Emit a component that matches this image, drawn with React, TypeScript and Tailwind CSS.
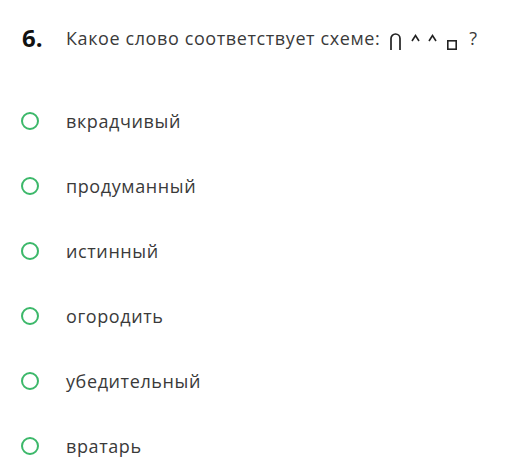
import React from "react";

const options = [
  "вкрадчивый",
  "продуманный",
  "истинный",
  "огородить",
  "убедительный",
  "вратарь",
];

function Caret() {
  return (
    <svg width="9" height="8" viewBox="0 0 9 8" className="block">
      <polyline points="1,7 4.5,1.5 8,7" fill="none" stroke="#222" strokeWidth="1.6" />
    </svg>
  );
}

export default function App() {
  return (
    <div className="w-[518px] h-[471px] bg-white" style={{ fontFamily: '"Open Sans", "Noto Sans", sans-serif' }}>
      <div className="flex items-center pt-[22px] pl-[22px] h-[54px]">
        <span className="w-[44px] text-[24px] font-bold text-[#111] leading-none">6.</span>
        <span className="text-[18px] tracking-[0.6px] text-[#3a3a3a] leading-none">Какое слово соответствует схеме:</span>
        <svg width="11" height="17" viewBox="0 0 11 17" className="ml-[10px] self-start mt-[11px] block">
          <path d="M1 17 V5.5 A4.5 4.5 0 0 1 10 5.5 V17" fill="none" stroke="#222" strokeWidth="1.7" />
        </svg>
        <span className="ml-[10px] self-start mt-[12px]"><Caret /></span>
        <span className="ml-[8px] self-start mt-[12px]"><Caret /></span>
        <svg width="10" height="10" viewBox="0 0 10 10" className="ml-[10px] self-start mt-[18px] block">
          <rect x="0.8" y="0.8" width="8.4" height="8.4" fill="none" stroke="#222" strokeWidth="1.6" />
        </svg>
        <span className="ml-[12px] text-[18px] text-[#3a3a3a] leading-none">?</span>
      </div>
      <div className="flex flex-col pt-[34px]">
        {options.map((o) => (
          <div key={o} className="flex items-center h-[65px] pl-[21px]">
            <span className="w-[18px] h-[18px] rounded-full border-[2.5px] border-[#3cb86a]" />
            <span className="ml-[27px] text-[18px] tracking-[0.6px] text-[#3a3a3a] leading-none">{o}</span>
          </div>
        ))}
      </div>
    </div>
  );
}
